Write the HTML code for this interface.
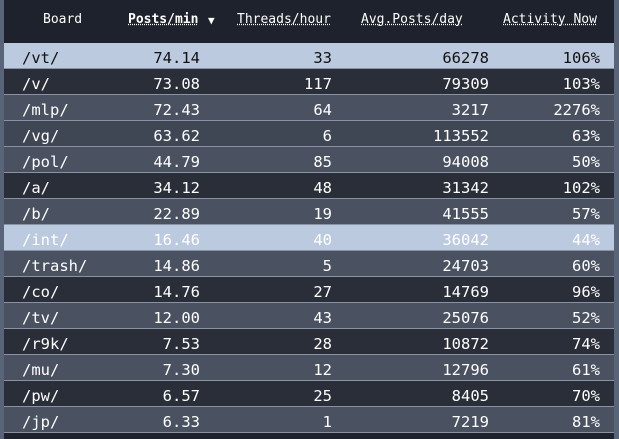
<!DOCTYPE html><html><head><style>
body{margin:0;width:619px;height:439px;overflow:hidden;background:#1e222c;font-family:"DejaVu Sans Mono","Liberation Mono",monospace;}
.l{position:absolute;left:0;top:0;width:4px;height:439px;background:#5a6478}
.r{position:absolute;left:614px;top:0;width:5px;height:439px;background:#5a6478}
.h{position:absolute;top:0;left:4px;width:610px;height:43px;background:#1e222c;color:#fff;font-family:"DejaVu Sans Mono","Liberation Mono",monospace;font-size:13px}
.h span{position:absolute;top:12px;text-decoration:underline dotted;}
.row{position:absolute;left:4px;width:610px;height:25px;border-bottom:1px solid #8a93a3;font-size:15.5px;color:#fff}
.row span{position:absolute;top:6px}
.a{left:18px}.b{right:414px}.c{right:282px}.d{right:125px}.e{right:14px}
.L{background:#bccae0;color:#111}.D{background:#2a2e38}.M{background:#4a5261}
</style></head><body>
<div class="l"></div><div class="r"></div>
<div class="h"><span style="left:39px;text-decoration:none">Board</span><span style="left:124px;font-weight:bold">Posts/min</span><span style="left:204px;font-size:11px;top:14px;text-decoration:none">▼</span><span style="left:233px">Threads/hour</span><span style="left:357px">Avg.Posts/day</span><span style="left:499px">Activity Now</span></div>
<div class="row L" style="top:43px"><span class="a">/vt/</span><span class="b">74.14</span><span class="c">33</span><span class="d">66278</span><span class="e">106%</span></div>
<div class="row D" style="top:69px"><span class="a">/v/</span><span class="b">73.08</span><span class="c">117</span><span class="d">79309</span><span class="e">103%</span></div>
<div class="row M" style="top:95px"><span class="a">/mlp/</span><span class="b">72.43</span><span class="c">64</span><span class="d">3217</span><span class="e">2276%</span></div>
<div class="row M" style="top:121px;background:#3f4654"><span class="a">/vg/</span><span class="b">63.62</span><span class="c">6</span><span class="d">113552</span><span class="e">63%</span></div>
<div class="row M" style="top:147px"><span class="a">/pol/</span><span class="b">44.79</span><span class="c">85</span><span class="d">94008</span><span class="e">50%</span></div>
<div class="row D" style="top:173px"><span class="a">/a/</span><span class="b">34.12</span><span class="c">48</span><span class="d">31342</span><span class="e">102%</span></div>
<div class="row M" style="top:199px"><span class="a">/b/</span><span class="b">22.89</span><span class="c">19</span><span class="d">41555</span><span class="e">57%</span></div>
<div class="row L" style="top:225px;color:#fff"><span class="a">/int/</span><span class="b">16.46</span><span class="c">40</span><span class="d">36042</span><span class="e">44%</span></div>
<div class="row M" style="top:251px"><span class="a">/trash/</span><span class="b">14.86</span><span class="c">5</span><span class="d">24703</span><span class="e">60%</span></div>
<div class="row D" style="top:277px"><span class="a">/co/</span><span class="b">14.76</span><span class="c">27</span><span class="d">14769</span><span class="e">96%</span></div>
<div class="row M" style="top:303px"><span class="a">/tv/</span><span class="b">12.00</span><span class="c">43</span><span class="d">25076</span><span class="e">52%</span></div>
<div class="row D" style="top:329px"><span class="a">/r9k/</span><span class="b">7.53</span><span class="c">28</span><span class="d">10872</span><span class="e">74%</span></div>
<div class="row M" style="top:355px"><span class="a">/mu/</span><span class="b">7.30</span><span class="c">12</span><span class="d">12796</span><span class="e">61%</span></div>
<div class="row D" style="top:381px"><span class="a">/pw/</span><span class="b">6.57</span><span class="c">25</span><span class="d">8405</span><span class="e">70%</span></div>
<div class="row M" style="top:407px"><span class="a">/jp/</span><span class="b">6.33</span><span class="c">1</span><span class="d">7219</span><span class="e">81%</span></div>
</body></html>
